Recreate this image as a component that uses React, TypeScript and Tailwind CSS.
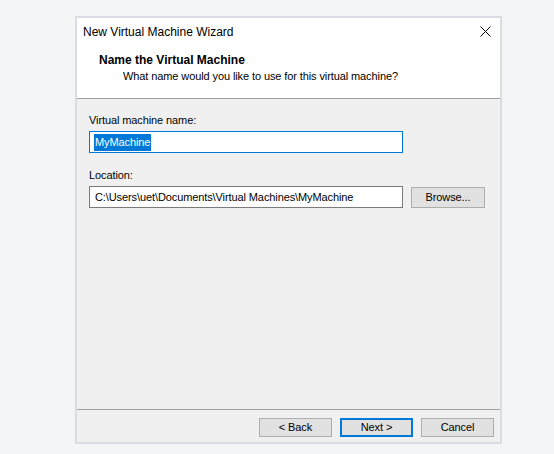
import React from "react"

const font = { fontFamily: '"Liberation Sans", Arial, sans-serif' }

function Button({ label, primary, w = "w-[73px]", h = "h-[19px]" }: { label: string; primary?: boolean; w?: string; h?: string }) {
    return (
        <div
            className={
                w + " " + h + " flex items-center justify-center bg-[#e1e1e1] text-[11px] tracking-[-0.1px] text-black " +
                (primary ? "border-2 border-[#0078d7]" : "border border-[#adadad]")
            }
        >
            {label}
        </div>
    )
}

export default function App() {
    return (
        <div className="w-[554px] h-[454px] bg-[#f4f5f7] pt-[16px] pl-[75px] overflow-hidden" style={font}>
            <div className="w-[427px] h-[428px] border-2 border-[#d9dde3] flex flex-col bg-white text-[11px] tracking-[-0.1px] text-black">
                {/* title bar */}
                <div className="h-[26px] flex items-center justify-between pl-[6px] pr-[9px]">
                    <span className="text-[12px] tracking-normal leading-none pt-[1px]">New Virtual Machine Wizard</span>
                    <svg width="11" height="11" viewBox="0 0 11 11">
                        <path d="M0.5 0.5 L10.5 10.5 M10.5 0.5 L0.5 10.5" stroke="#000" strokeWidth="1" />
                    </svg>
                </div>

                {/* header */}
                <div className="h-[54px] flex flex-col pt-[8px]">
                    <div className="pl-[22px] font-bold text-[12px] tracking-normal leading-[16px]">Name the Virtual Machine</div>
                    <div className="pl-[46px] leading-[16px]">What name would you like to use for this virtual machine?</div>
                </div>

                <div className="h-[1px] bg-[#a0a0a0]" />

                {/* body */}
                <div className="flex-1 bg-[#f0f0f0] pl-[12px] pt-[13px]">
                    <div className="leading-[16px]">Virtual machine name:</div>
                    <div className="mt-[3px] w-[314px] h-[22px] border border-[#0078d7] bg-white flex items-center pl-[4px]">
                        <span className="bg-[#0078d7] text-white leading-[17px] px-[1px]">MyMachine</span>
                    </div>

                    <div className="mt-[14px] leading-[16px]">Location:</div>
                    <div className="mt-[3px] flex items-center gap-[8px]">
                        <div className="w-[314px] h-[22px] border border-[#7a7a7a] bg-white flex items-center pl-[5px] whitespace-nowrap">
                            C:\Users\uet\Documents\Virtual Machines\MyMachine
                        </div>
                        <Button label="Browse..." w="w-[74px]" h="h-[21px]" />
                    </div>
                </div>

                <div className="h-[1px] bg-[#a0a0a0]" />

                {/* footer */}
                <div className="h-[32px] bg-[#f0f0f0] flex justify-end items-start pt-[8px] pr-[6px] gap-[8px]">
                    <Button label="< Back" />
                    <Button label="Next >" primary />
                    <Button label="Cancel" />
                </div>
            </div>
        </div>
    )
}
